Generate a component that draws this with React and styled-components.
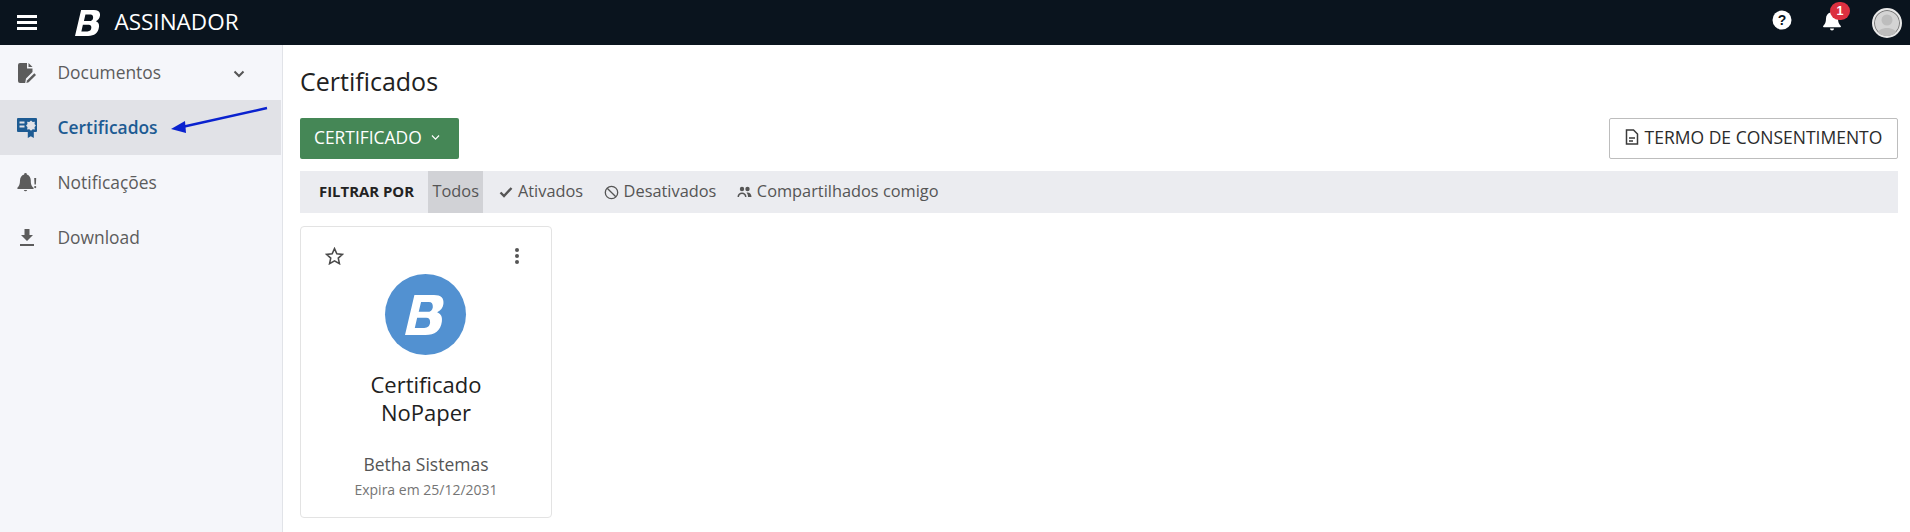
import React from "react";
import styled, { createGlobalStyle } from "styled-components";

const Global = createGlobalStyle`
  html, body { margin: 0; padding: 0; background: #fff; font-family: "Open Sans", "Noto Sans", sans-serif; }
  * { box-sizing: border-box; }
`;
const Page = styled.div`position: relative; width: 1910px; height: 532px; overflow: hidden; display: flex; flex-direction: column;`;
const TopBar = styled.header`height: 45px; background: #0a141e; display: flex; align-items: center; color: #fff; flex: none;`;
const Burger = styled.div`width: 20px; margin-left: 17px; display: flex; flex-direction: column; gap: 3px;
  span { display: block; height: 3px; background: #fff; }`;
const LogoWrap = styled.div`margin-left: 38px; display: flex; align-items: center;`;
const Brand = styled.div`margin-left: 14px; font-size: 22.5px; line-height: 1;`;
const Spacer = styled.div`flex: 1;`;
const IconBtn = styled.div`position: relative; display: flex; align-items: center; justify-content: center; margin-left: ${p => p.$gap || 0}px; margin-top: ${p => p.$top || 0}px;`;
const Badge = styled.span`position: absolute; top: -9px; left: 8px; width: 20px; height: 18px; border-radius: 9px; background: #dc3040; font: 700 12.5px "Liberation Sans", sans-serif; color: #fff; display: flex; align-items: center; justify-content: center;`;
const Avatar = styled.div`width: 30px; height: 30px; border-radius: 50%; background: #d4d4d4; border: 2px solid #e8e8e8; overflow: hidden; margin-left: 30px; margin-right: 8px; box-shadow: inset 0 0 0 1px #777;`;
const Body = styled.div`flex: 1; display: flex; min-height: 0;`;
const Side = styled.nav`width: 283px; flex: none; background: #f5f6fa; border-right: 1px solid #e1e3e8;`;
const Item = styled.div`height: 55px; display: flex; align-items: center; padding-left: 17px; font-size: 17.4px; width: 281px;
  color: ${p => p.$active ? "#1d5b93" : "#5c5c5c"}; font-weight: ${p => p.$active ? 600 : 400};
  background: ${p => p.$active ? "#e1e2e7" : "transparent"};`;
const ItemIcon = styled.span`width: 40.5px; display: flex; flex: none;`;
const ItemLabel = styled.span`flex: 1; padding-bottom: 2px;`;
const Caret = styled.span`display: flex; margin-right: 35px; margin-top: 2px;`;
const Main = styled.main`flex: 1; padding: 18px 12px 0 17px; min-width: 0;`;
const Title = styled.h1`margin: 0; font-size: 25px; line-height: 36px; font-weight: 400; color: #212121; height: 55px;`;
const Actions = styled.div`display: flex; justify-content: space-between; height: 41px;`;
const GreenBtn = styled.button`width: 159px; height: 41px; border: 0; border-radius: 2px; background: #458756; color: #fff; font: 400 17.4px "Open Sans", sans-serif; display: flex; align-items: center; padding: 0 0 3px 14px; gap: 8px;`;
const OutlineBtn = styled.button`width: 289px; height: 41px; border: 1px solid #bdbdbd; border-radius: 2px; background: #fff; color: #2b2b2b; font: 400 17.5px "Open Sans", sans-serif; display: flex; align-items: center; justify-content: center; gap: 6px; padding: 0 0 3px; white-space: nowrap;`;
const Filter = styled.div`margin-top: 12px; height: 42px; background: #ebecf0; display: flex; align-items: center; padding-left: 19px; font-size: 16.35px; color: #555;`;
const FilterLabel = styled.span`font-weight: 700; font-size: 14.9px; color: #222; margin-right: 14px; padding-bottom: 2px;`;
const FilterItem = styled.span`height: 100%; display: flex; align-items: center; gap: 4.5px; padding: 0 ${p => p.$sel ? "4.5px" : "0"} 3px; margin-right: ${p => p.$sel ? "16px" : "21px"}; background: ${p => p.$sel ? "#d1d2d6" : "transparent"}; white-space: nowrap;
  svg { margin-top: 3px; }`;
const Card = styled.article`position: relative; margin-top: 13px; width: 252px; height: 292px; border: 1px solid #e3e3e3; border-radius: 4px; display: flex; flex-direction: column; align-items: center; padding-top: 47px;`;
const Star = styled.span`position: absolute; left: 24px; top: 20px; display: flex;`;
const Dots = styled.span`position: absolute; right: 32px; top: 21px; display: flex; flex-direction: column; gap: 2px;
  i { display: block; width: 4px; height: 4px; border-radius: 50%; background: #555; }`;
const Circle = styled.div`width: 81px; height: 81px; border-radius: 50%; background: #5291d1; display: flex; align-items: center; justify-content: center; flex: none; margin-right: 2px;`;
const CardName = styled.div`margin-top: 15px; width: 180px; text-align: center; font-size: 22px; line-height: 28px; color: #212121;`;
const Issuer = styled.div`margin-top: 27px; font-size: 17.5px; line-height: 22px; color: #555;`;
const Expire = styled.div`margin-top: 6px; font-size: 14px; line-height: 18px; color: #757575;`;
const ArrowLayer = styled.svg`position: absolute; left: 160px; top: 100px; pointer-events: none;`;

const BLogo = ({ h, color }) => (
  <svg width={h * 0.98} height={h} viewBox="0 0 50 51" aria-hidden="true">
    <path fill={color} fillRule="evenodd" d="M12 0h25c9 0 13 4 12 11.5-.7 5-3.500 8.500-8 10.500 5 2 7 6 6 12-1.400 11-9 17-21 17H0L12 0Zm8.500 9-3 12.500h11c4 0 6.500-1.800 7-6 .3-4-1.500-6.500-5-6.500h-10Zm-5 20-3 13h12c4.800 0 7-2.500 7.500-6.500.4-4-1.200-6.500-5-6.500h-11.500Z" />
  </svg>
);

const Chevron = ({ size = 14, color = "#555", w = 2 }) => (
  <svg width={size} height={size} viewBox="0 0 14 14" fill="none" stroke={color} strokeWidth={w}><path d="M2.500 4.500 7 9l4.500-4.500" /></svg>
);

export default function App() {
  return (
    <Page>
      <Global />
      <TopBar>
        <Burger><span /><span /><span /></Burger>
        <LogoWrap><BLogo h={26} color="#fff" /></LogoWrap>
        <Brand>ASSINADOR</Brand>
        <Spacer />
        <IconBtn $top={-5}>
          <svg width="20" height="20" viewBox="0 0 20 20"><circle cx="10" cy="10" r="9.500" fill="#fff" /><text x="10" y="15" textAnchor="middle" fontSize="14" fontWeight="700" fontFamily="Liberation Sans" fill="#0a141e">?</text></svg>
        </IconBtn>
        <IconBtn $gap={30} $top={-3}>
          <svg width="20" height="20" viewBox="0 0 20 20" fill="#fff"><path d="M10 0a1.500 1.500 0 0 0-1.500 1.600C5.600 2.300 4 4.700 4 7.500c0 4-1 5.500-2.800 7.500-.4.500 0 1.200.6 1.200h16.400c.6 0 1-.7.600-1.200C17 13 16 11.500 16 7.500c0-2.800-1.600-5.200-4.500-5.900A1.500 1.500 0 0 0 10 0ZM8 17.500a2 2 0 0 0 4 0H8Z" /></svg>
          <Badge>1</Badge>
        </IconBtn>
        <Avatar>
          <svg width="26" height="26" viewBox="0 0 26 26"><circle cx="13" cy="10" r="5.500" fill="#bdbdbd" /><path d="M3 26c0-6 5-8 10-8s10 2 10 8Z" fill="#bdbdbd" /></svg>
        </Avatar>
      </TopBar>
      <Body>
        <Side>
          <Item>
            <ItemIcon><svg width="20" height="20" viewBox="0 0 20 20" fill="#5c5c5c"><path d="M1 2a2 2 0 0 1 2-2h7v5.500h5.500V9l-6.500 6.500-.8 4.500H3a2 2 0 0 1-2-2V2Z" /><path d="M11.500 0 15.500 4h-4V0Z" /><path d="m17.300 10.300 1.700 1.700-7.300 7.300-2.300.7.600-2.400 7.300-7.300Z" /></svg></ItemIcon>
            <ItemLabel>Documentos</ItemLabel>
            <Caret><Chevron /></Caret>
          </Item>
          <Item $active>
            <ItemIcon><svg width="20" height="20" viewBox="0 0 20 20" fill="#1d5b93"><path fillRule="evenodd" d="M1 0h18a1 1 0 0 1 1 1v12a1 1 0 0 1-1 1h-2.200v6l-3-1.800-3 1.800v-6H1a1 1 0 0 1-1-1V1a1 1 0 0 1 1-1Zm1.500 3.500v2h5v-2h-5Zm0 4v2h5v-2h-5Zm11.500-5-1.700 1.400-2.200-.2.400 2.200-1.400 1.700 1.400 1.700-.4 2.200 2.200-.2 1.700 1.400 1.700-1.400 2.200.2-.4-2.200 1.400-1.700-1.400-1.700.4-2.200-2.200.2L14 2.500Z" /></svg></ItemIcon>
            <ItemLabel>Certificados</ItemLabel>
          </Item>
          <Item>
            <ItemIcon><svg width="20" height="20" viewBox="0 0 20 20" fill="#5c5c5c"><path d="M8.500 0a1.300 1.300 0 0 0-1.300 1.500C4.500 2.200 3 4.500 3 7.500c0 4-1 5.500-2.600 7.300-.4.500 0 1.200.6 1.200h15c.6 0 1-.7.600-1.200C14.500 13 13.800 11.500 13.800 7.500c0-3-1.500-5.300-4-6A1.300 1.300 0 0 0 8.500 0ZM6.800 17a1.800 1.800 0 0 0 3.400 0H6.800Z" /><path d="M17.200 5h2l-.3 6.500h-1.400L17.200 5Zm1 8a1.100 1.100 0 1 1 0 2.200 1.100 1.100 0 0 1 0-2.200Z" /></svg></ItemIcon>
            <ItemLabel>Notificações</ItemLabel>
          </Item>
          <Item>
            <ItemIcon><svg width="20" height="20" viewBox="0 0 20 20" fill="#5c5c5c"><path d="M7.500 1h5v6h3.500L10 13 4 7h3.500V1ZM3 16h14v2H3v-2Z" /></svg></ItemIcon>
            <ItemLabel>Download</ItemLabel>
          </Item>
        </Side>
        <Main>
          <Title>Certificados</Title>
          <Actions>
            <GreenBtn>CERTIFICADO <Chevron size={11} color="#fff" w={1.500} /></GreenBtn>
            <OutlineBtn>
              <svg width="14" height="16" viewBox="0 0 14 16" fill="none" stroke="#3a3a3a" strokeWidth="1.500"><path d="M1.500 1h7L12.500 5v10h-11V1Z" /><path d="M4 9h6M4 12h4" /></svg>
              TERMO DE CONSENTIMENTO
            </OutlineBtn>
          </Actions>
          <Filter>
            <FilterLabel>FILTRAR POR</FilterLabel>
            <FilterItem $sel>Todos</FilterItem>
            <FilterItem>
              <svg width="14" height="12" viewBox="0 0 14 12" fill="none" stroke="#555" strokeWidth="2.400"><path d="m1.500 6.500 3.500 3.500 7.500-8" /></svg>
              Ativados
            </FilterItem>
            <FilterItem>
              <svg width="15" height="15" viewBox="0 0 15 15" fill="none" stroke="#555" strokeWidth="1.300"><circle cx="7.500" cy="7.500" r="6.200" /><path d="m3.200 3.200 8.600 8.600" /></svg>
              Desativados
            </FilterItem>
            <FilterItem>
              <svg width="15" height="12" viewBox="0 0 15 12" fill="#555"><circle cx="5" cy="3" r="2.200" /><circle cx="10.500" cy="3" r="2.200" /><path d="M0.500 11c0-3 2-4.500 4.500-4.500S9.500 8 9.500 11H8c0-1.500-1-3-3-3s-3 1.500-3 3H.5Zm10-4.500c2.500 0 4 1.800 4 4.500h-3.500c0-2-.5-3.300-1.500-4.300.3-.1.600-.2 1-.2Z" /></svg>
              Compartilhados comigo
            </FilterItem>
          </Filter>
          <Card>
            <Star><svg width="19" height="18" viewBox="0 0 24 23" fill="none" stroke="#4a4a4a" strokeWidth="2"><path d="m12 2 3 6.600 7.200.8-5.400 4.800 1.500 7.100L12 17.700l-6.300 3.600 1.500-7.100L1.800 9.400 9 8.600 12 2Z" /></svg></Star>
            <Dots><i /><i /><i /></Dots>
            <Circle><BLogo h={40} color="#fff" /></Circle>
            <CardName>Certificado NoPaper</CardName>
            <Issuer>Betha Sistemas</Issuer>
            <Expire>Expira em 25/12/2031</Expire>
          </Card>
        </Main>
      </Body>
      <ArrowLayer width="110" height="40" viewBox="0 0 110 40">
        <path d="M107 8 22 27" stroke="#0a22cf" strokeWidth="2.500" fill="none" />
        <path d="M11 29 25 21l1 12Z" fill="#0a22cf" />
      </ArrowLayer>
    </Page>
  );
}
